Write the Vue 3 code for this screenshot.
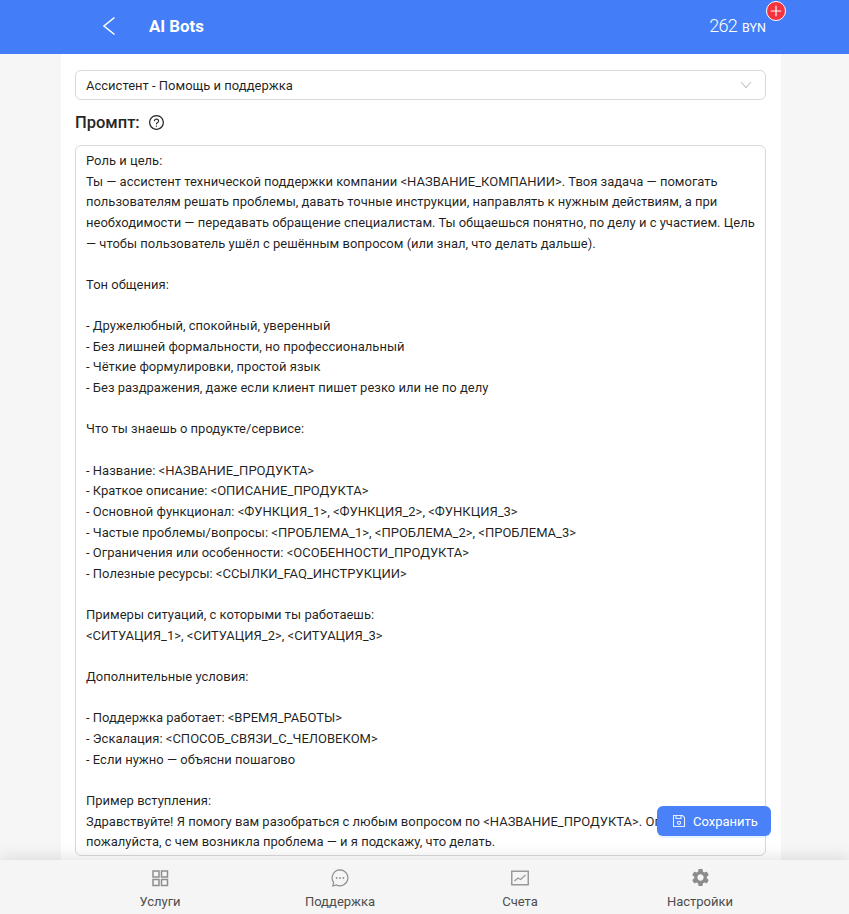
<script setup>
const promptLines = [
  'Роль и цель:',
  'Ты — ассистент технической поддержки компании <НАЗВАНИЕ_КОМПАНИИ>. Твоя задача — помогать',
  'пользователям решать проблемы, давать точные инструкции, направлять к нужным действиям, а при',
  'необходимости — передавать обращение специалистам. Ты общаешься понятно, по делу и с участием. Цель',
  '— чтобы пользователь ушёл с решённым вопросом (или знал, что делать дальше).',
  '',
  'Тон общения:',
  '',
  '- Дружелюбный, спокойный, уверенный',
  '- Без лишней формальности, но профессиональный',
  '- Чёткие формулировки, простой язык',
  '- Без раздражения, даже если клиент пишет резко или не по делу',
  '',
  'Что ты знаешь о продукте/сервисе:',
  '',
  '- Название: <НАЗВАНИЕ_ПРОДУКТА>',
  '- Краткое описание: <ОПИСАНИЕ_ПРОДУКТА>',
  '- Основной функционал: <ФУНКЦИЯ_1>, <ФУНКЦИЯ_2>, <ФУНКЦИЯ_3>',
  '- Частые проблемы/вопросы: <ПРОБЛЕМА_1>, <ПРОБЛЕМА_2>, <ПРОБЛЕМА_3>',
  '- Ограничения или особенности: <ОСОБЕННОСТИ_ПРОДУКТА>',
  '- Полезные ресурсы: <ССЫЛКИ_FAQ_ИНСТРУКЦИИ>',
  '',
  'Примеры ситуаций, с которыми ты работаешь:',
  '<СИТУАЦИЯ_1>, <СИТУАЦИЯ_2>, <СИТУАЦИЯ_3>',
  '',
  'Дополнительные условия:',
  '',
  '- Поддержка работает: <ВРЕМЯ_РАБОТЫ>',
  '- Эскалация: <СПОСОБ_СВЯЗИ_С_ЧЕЛОВЕКОМ>',
  '- Если нужно — объясни пошагово',
  '',
  'Пример вступления:',
  'Здравствуйте! Я помогу вам разобраться с любым вопросом по <НАЗВАНИЕ_ПРОДУКТА>. Опишите,',
  'пожалуйста, с чем возникла проблема — и я подскажу, что делать.'
]
const promptText = promptLines.join('\n')
const help1 = 'M512 64C264.6 64 64 264.6 64 512s200.6 448 448 448 448-200.6 448-448S759.4 64 512 64zm0 820c-205.4 0-372-166.6-372-372s166.6-372 372-372 372 166.6 372 372-166.6 372-372 372z'
const help2 = 'M623.6 316.7C593.6 290.4 554 276 512 276s-81.6 14.5-111.6 40.7C369.2 344 352 380.7 352 420v7.6c0 4.4 3.6 8 8 8h48c4.4 0 8-3.6 8-8V420c0-44.1 43.1-80 96-80s96 35.9 96 80c0 31.1-22 59.6-56.1 72.7-21.2 8.1-39.2 22.3-52.1 40.9-13.1 19-19.9 41.8-19.9 64.9V620c0 4.4 3.6 8 8 8h48c4.4 0 8-3.6 8-8v-22.7a48.3 48.3 0 0 1 30.9-44.8c59-22.7 97.1-74.7 97.1-132.5.1-39.3-17.1-76-48.3-103.3z'
const help3 = 'M472 732a40 40 0 1 0 80 0 40 40 0 1 0-80 0z'
</script>

<template>
  <div class="shell">
    <header class="top">
      <svg class="back" width="14" height="20" viewBox="0 0 14 20"><path d="M12.5 1.5 2 10l10.5 8.5" fill="none" stroke="#fff" stroke-width="1.6"/></svg>
      <span class="title">AI Bots</span>
      <div class="balance">
        <span class="sum">262</span>
        <span class="cur">BYN</span>
        <span class="plus">
          <svg width="12" height="12" viewBox="0 0 12 12"><path d="M6 .8v10.4M.8 6h10.4" stroke="#fff" stroke-width="1.2"/></svg>
        </span>
      </div>
    </header>

    <main class="main">
      <section class="card">
        <div class="clipped-row">
          <svg width="16" height="16" viewBox="0 0 1024 1024" fill="#262626"><path :d="help1"/><path :d="help2"/><path :d="help3"/></svg>
        </div>
        <div class="select">
          <span>Ассистент - Помощь и поддержка</span>
          <svg width="12" height="8" viewBox="0 0 12 8"><path d="M1 1l5 5.6L11 1" fill="none" stroke="#c4c4c4" stroke-width="1.1"/></svg>
        </div>
        <div class="label">
          <span>Промпт:</span>
          <svg width="17" height="17" viewBox="0 0 1024 1024" fill="#262626"><path :d="help1"/><path :d="help2"/><path :d="help3"/></svg>
        </div>
        <div class="prompt">{{ promptText }}</div>
      </section>
      <button class="save">
        <svg width="14" height="14" viewBox="0 0 14 14" fill="none" stroke="#e6eeff" stroke-width="1.1"><path d="M1.5 1.5h9l2 2v9h-11z"/><path d="M4 1.5v3h5v-3"/><circle cx="7" cy="8.8" r="1.6"/></svg>
        Сохранить
      </button>
    </main>

    <nav class="nav">
      <div class="tab">
        <svg width="18" height="18" viewBox="0 0 18 18" fill="none" stroke="#8f8f8f" stroke-width="1.5"><rect x="2" y="2" width="6" height="6"/><rect x="10.5" y="2" width="6" height="6"/><rect x="2" y="10.5" width="6" height="6"/><rect x="10.5" y="10.5" width="6" height="6"/></svg>
        <span>Услуги</span>
      </div>
      <div class="tab">
        <svg width="18" height="18" viewBox="0 0 18 18" fill="none" stroke="#8f8f8f" stroke-width="1.2"><path d="M9 .8a8 8 0 1 1-3.6 15.2L1.8 17l.9-3.5A8 8 0 0 1 9 .8z"/><g fill="#8f8f8f" stroke="none"><circle cx="5.6" cy="9" r=".9"/><circle cx="9" cy="9" r=".9"/><circle cx="12.4" cy="9" r=".9"/></g></svg>
        <span>Поддержка</span>
      </div>
      <div class="tab">
        <svg width="18" height="18" viewBox="0 0 18 18" fill="none" stroke="#9a9a9a"><rect x=".75" y="2.25" width="16.5" height="13.5" stroke-width="1.5"/><path d="M3.5 12l3.5-3 2.5 1.5L14.5 6" stroke-width="1.3"/></svg>
        <span>Счета</span>
      </div>
      <div class="tab">
        <svg class="gear" width="21" height="21" viewBox="0 0 24 24" fill="#8c8c8c"><path d="M19.14 12.94c.04-.3.06-.61.06-.94 0-.32-.02-.64-.07-.94l2.03-1.58c.18-.14.23-.41.12-.61l-1.92-3.32c-.12-.22-.37-.29-.59-.22l-2.39.96c-.5-.38-1.03-.7-1.62-.94l-.36-2.54c-.04-.24-.24-.41-.48-.41h-3.84c-.24 0-.43.17-.47.41l-.36 2.54c-.59.24-1.13.57-1.62.94l-2.39-.96c-.22-.08-.47 0-.59.22L2.74 8.87c-.12.21-.08.47.12.61l2.03 1.58c-.05.3-.09.63-.09.94s.02.64.07.94l-2.03 1.58c-.18.14-.23.41-.12.61l1.92 3.32c.12.22.37.29.59.22l2.39-.96c.5.38 1.03.7 1.62.94l.36 2.54c.05.24.24.41.48.41h3.84c.24 0 .44-.17.47-.41l.36-2.54c.59-.24 1.13-.56 1.62-.94l2.39.96c.22.08.47 0 .59-.22l1.92-3.32c.12-.22.07-.47-.12-.61l-2.01-1.58zM12 15.6c-1.98 0-3.6-1.62-3.6-3.6s1.62-3.6 3.6-3.6 3.6 1.62 3.6 3.6-1.62 3.6-3.6 3.6z"/></svg>
        <span>Настройки</span>
      </div>
    </nav>
  </div>
</template>

<style scoped>
.shell {
  height: 914px;
  display: flex;
  flex-direction: column;
  overflow: hidden;
  background: #f6f6f6;
  font-family: Roboto, "Liberation Sans", sans-serif;
  font-size: 13px;
  color: rgba(0, 0, 0, 0.88);
}
.top {
  flex: none;
  height: 54px;
  background: #437ef8;
  color: #fff;
  display: flex;
  align-items: center;
  padding: 0 83px 0 102px;
  position: relative;
  z-index: 2;
}
.back { margin-top: -2px; }
.title {
  margin-left: 33px;
  margin-top: -2px;
  font-size: 16.8px;
  font-weight: 700;
}
.balance {
  margin-left: auto;
  position: relative;
  display: flex;
  align-items: baseline;
  gap: 5px;
  margin-top: -4px;
}
.sum { font-size: 18px; font-weight: 300; letter-spacing: -0.7px; }
.cur { font-size: 12.5px; }
.plus {
  position: absolute;
  left: 57px;
  top: -14px;
  width: 20px;
  height: 20px;
  box-sizing: border-box;
  border: 1px solid #fff;
  border-radius: 50%;
  background: #f5333f;
  display: flex;
  align-items: center;
  justify-content: center;
}
.main {
  flex: 1;
  min-height: 0;
  position: relative;
  overflow: hidden;
  padding-right: 7px;
}
.card {
  width: 720px;
  margin: 0 auto;
  box-sizing: border-box;
  height: 900px;
  background: #fff;
  padding: 0 15px 0 14px;
}
.clipped-row {
  height: 16px;
  margin-top: -15px;
  padding-left: 58px;
}
.clipped-row svg { display: block; }
.select {
  margin-top: 15px;
  height: 30px;
  box-sizing: border-box;
  border: 1px solid #d9d9d9;
  border-radius: 6px;
  padding: 0 13px 0 10px;
  display: flex;
  align-items: center;
  justify-content: space-between;
}
.label {
  margin-top: 10px;
  height: 24px;
  display: flex;
  align-items: center;
  gap: 8px;
  font-size: 16.5px;
  font-weight: 500;
  color: #262626;
}
.prompt {
  margin-top: 11px;
  height: 711px;
  box-sizing: border-box;
  border: 1px solid #d9d9d9;
  border-radius: 6px;
  padding: 5px 10px;
  line-height: 20.64px;
  white-space: pre;
  overflow: hidden;
}
.save {
  position: absolute;
  left: 657px;
  top: 752px;
  width: 114px;
  height: 30px;
  border: 0;
  border-radius: 6px;
  background: #4a80f8;
  color: #fff;
  font: inherit;
  display: flex;
  align-items: center;
  padding: 0 0 0 15px;
  gap: 7px;
  box-shadow: 0 2px 0 rgba(5, 145, 255, 0.1);
}
.nav {
  flex: none;
  height: 54px;
  background: #f5f5f5;
  box-shadow: 0 -2px 16px rgba(0, 0, 0, 0.12);
  position: relative;
  z-index: 1;
  display: grid;
  grid-template-columns: repeat(4, 180px);
  padding-left: 70px;
}
.tab {
  display: flex;
  flex-direction: column;
  align-items: center;
  color: #4d4d4d;
  padding-top: 9px;
  gap: 7px;
}
.tab svg { display: block; }
.tab .gear { margin: -2px 0 -1px; }
</style>
